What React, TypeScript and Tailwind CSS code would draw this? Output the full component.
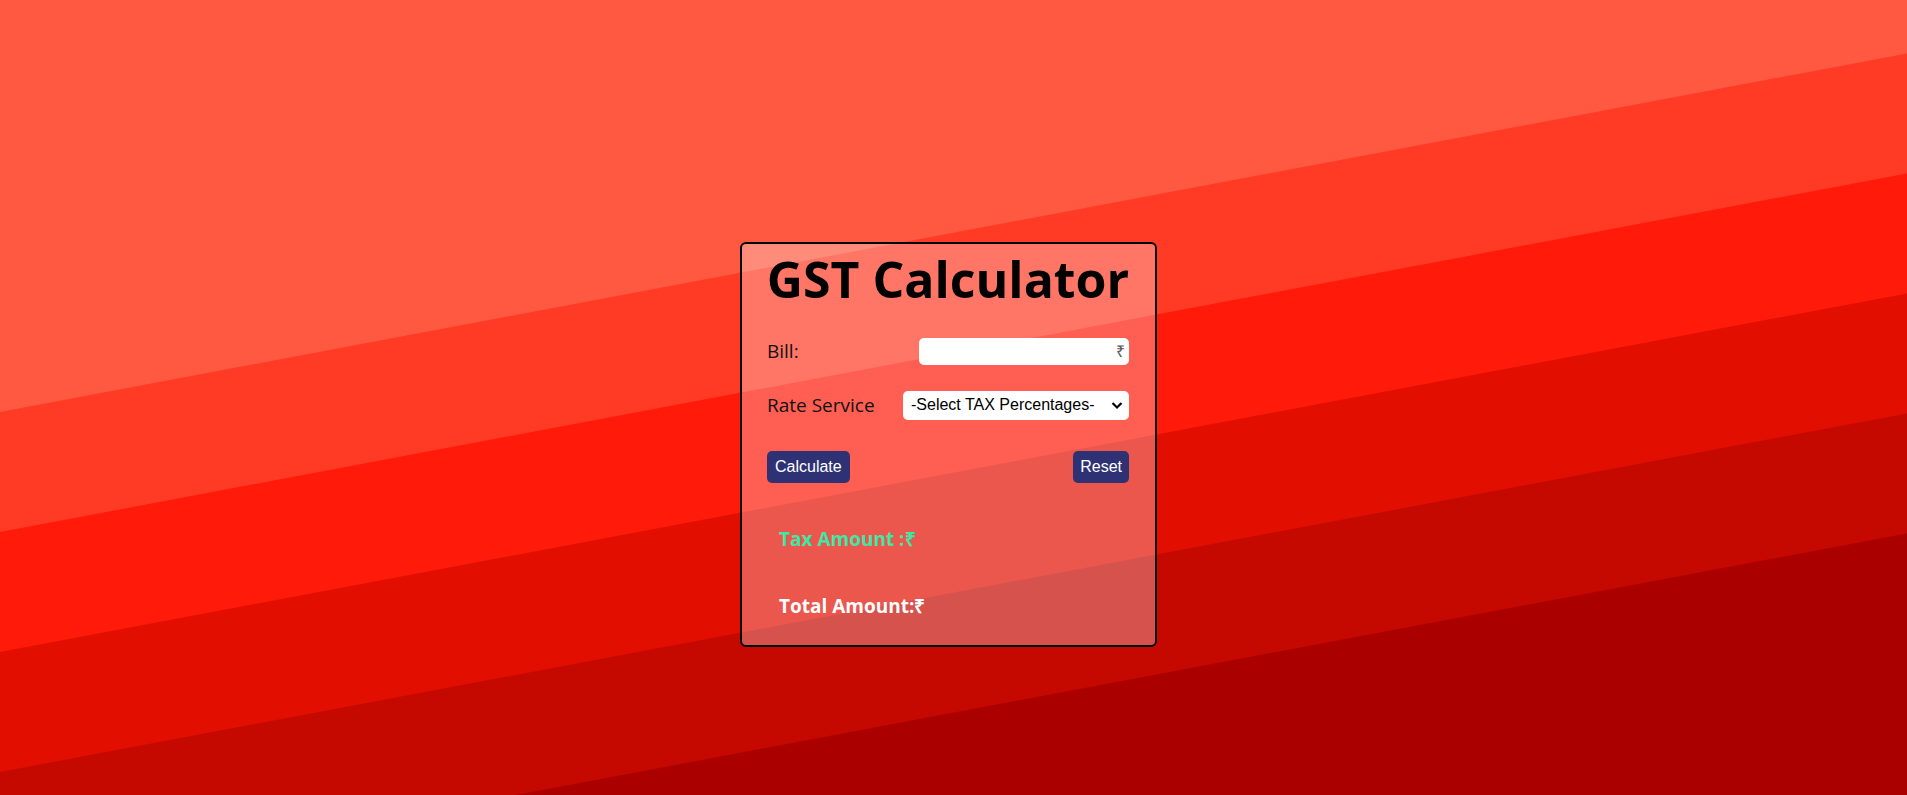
const BANDS = ["#ff3b25", "#ff1a0a", "#e20f00", "#c50800", "#aa0000"];

function Stripes() {
  return (
    <svg
      className="absolute inset-0 h-full w-full"
      viewBox="0 0 1907 795"
      preserveAspectRatio="none"
    >
      <rect width="1907" height="795" fill="#ff5a41" />
      {BANDS.map((c, i) => {
        const y0 = 412 + i * 120;
        const y1 = y0 - 358.5;
        return <polygon key={c} points={`0,${y0} 1907,${y1} 1907,795 0,795`} fill={c} />;
      })}
    </svg>
  );
}

export default function App() {
  return (
    <div className="relative min-h-screen w-full overflow-hidden font-['Open_Sans',sans-serif]">
      <Stripes />

      <div className="relative flex justify-center pt-[242px]">
        <div className="mr-[10px] w-[417px] rounded-[6px] border-2 border-black bg-white/30 pl-[25px] pr-[26px] pb-[24px]">
          <h1 className="-mx-[12px] whitespace-nowrap text-center text-[50px] font-bold leading-[70px] text-black">
            GST Calculator
          </h1>

          <div className="mt-[23px] flex items-center justify-between">
            <label className="text-[19px] text-[#111]">Bill:</label>
            <input
              type="text"
              inputMode="decimal"
              placeholder="₹"
              className="h-[27px] w-[210px] rounded-[5px] bg-white px-[4px] text-right text-[16px] text-black outline-none placeholder:text-[#555]"
            />
          </div>

          <div className="mt-[25px] flex items-center justify-between">
            <label className="text-[19px] text-[#111]">Rate Service</label>
            <div className="relative">
              <select className="h-[29px] w-[226px] appearance-none rounded-[5px] bg-white pl-[8px] pr-[24px] font-['Liberation_Sans',Arial,sans-serif] text-[16px] text-black outline-none">
                <option>-Select TAX Percentages-</option>
                <option>5%</option>
                <option>12%</option>
                <option>18%</option>
                <option>28%</option>
              </select>
              <svg
                className="pointer-events-none absolute right-[6px] top-[10px]"
                width="12"
                height="9"
                viewBox="0 0 12 9"
              >
                <path d="M1.5 2 L6 6.5 L10.5 2" fill="none" stroke="#000" strokeWidth="2.2" />
              </svg>
            </div>
          </div>

          <div className="mt-[31px] flex items-center justify-between">
            <button className="h-[32px] rounded-[5px] bg-[#2e3274] px-[8px] font-['Liberation_Sans',Arial,sans-serif] text-[16px] text-white">
              Calculate
            </button>
            <button className="h-[32px] rounded-[5px] bg-[#2e3274] px-[7px] font-['Liberation_Sans',Arial,sans-serif] text-[16px] text-white">
              Reset
            </button>
          </div>

          <div className="mt-[42px] pl-[12px]">
            <h3 className="text-[19px] font-bold text-[#3de8a6]">Tax Amount :₹</h3>
            <h3 className="mt-[39px] text-[19px] font-bold text-white">Total Amount:₹</h3>
          </div>
        </div>
      </div>
    </div>
  );
}
